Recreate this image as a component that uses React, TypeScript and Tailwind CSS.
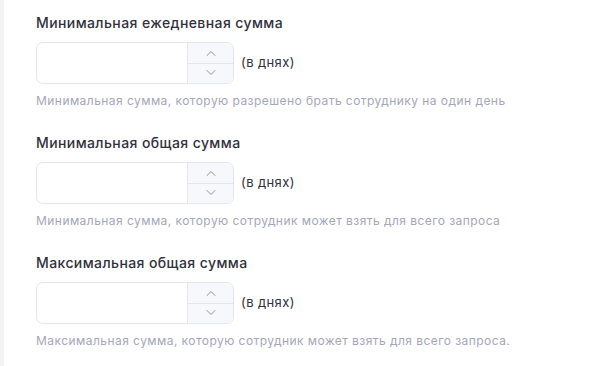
import React from "react";

const fields = [
  {
    label: "Минимальная ежедневная сумма",
    hint: "Минимальная сумма, которую разрешено брать сотруднику на один день",
  },
  {
    label: "Минимальная общая сумма",
    hint: "Минимальная сумма, которую сотрудник может взять для всего запроса",
  },
  {
    label: "Максимальная общая сумма",
    hint: "Максимальная сумма, которую сотрудник может взять для всего запроса.",
  },
];

function Chevron({ up }: { up?: boolean }) {
  return (
    <svg width="10" height="6" viewBox="0 0 10 6" fill="none">
      <path
        d={up ? "M1 5.5 5 1.5 9 5.5" : "M1 0.5 5 4.5 9 0.5"}
        stroke="#8b8fa3"
        strokeWidth="1"
        strokeLinecap="round"
        strokeLinejoin="round"
      />
    </svg>
  );
}

function NumberField() {
  return (
    <div className="flex items-center gap-[7px]">
      <div className="flex h-[42px] w-[198px] overflow-hidden rounded-[7px] border border-[#e4e5ee] bg-white">
        <input className="min-w-0 flex-1 bg-transparent px-3 outline-none" />
        <div className="flex w-[46px] flex-col border-l border-[#e4e5ee] bg-[#f7f8fb]">
          <button className="flex flex-1 items-center justify-center border-b border-[#e4e5ee]">
            <Chevron up />
          </button>
          <button className="flex flex-1 items-center justify-center">
            <Chevron />
          </button>
        </div>
      </div>
      <span className="text-[13px] tracking-[0.4px] text-[#2e3040]">(в днях)</span>
    </div>
  );
}

export default function App() {
  return (
    <div className="flex min-h-[366px] bg-white font-['Inter',sans-serif]">
      <div className="w-1 bg-[#f4f3f2]" />
      <div className="flex flex-1 flex-col pl-8 pt-[14px]">
        {fields.map((f) => (
          <div key={f.label} className="h-[120px]">
            <h3 className="mb-[10px] text-[14px] font-medium leading-[18px] tracking-[0.4px] text-[#30313c]">
              {f.label}
            </h3>
            <NumberField />
            <p className="mt-[9px] text-[12px] leading-[16px] tracking-[0.45px] text-[#a4a7b9]">
              {f.hint}
            </p>
          </div>
        ))}
      </div>
    </div>
  );
}
